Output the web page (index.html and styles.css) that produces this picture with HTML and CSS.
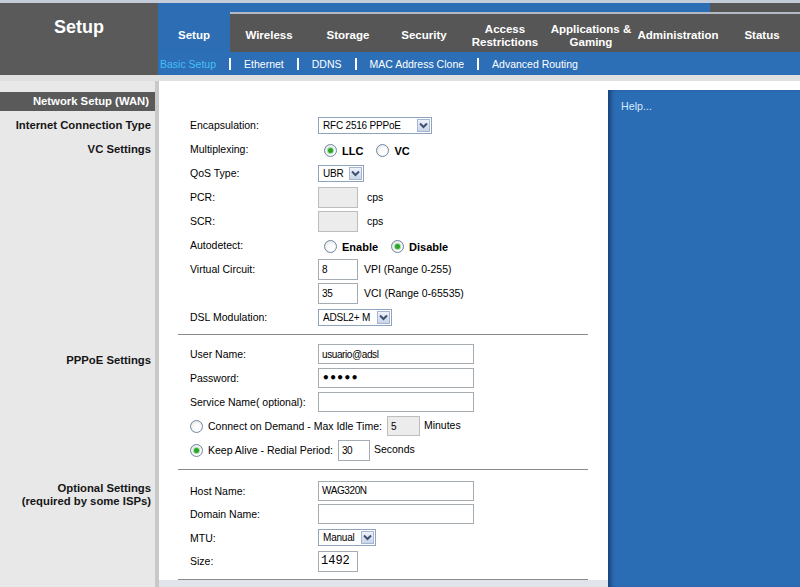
FILE: index.html
```html
<!DOCTYPE html>
<html lang="es">
<head>
<meta charset="utf-8">
<title>Setup</title>
<link rel="stylesheet" href="styles.css">
</head>
<body>
<div class="topline"></div>
<header class="header">
  <div class="brand">Setup</div>
  <nav class="nav">
    <div class="strip"><span class="strip-blue"></span><span class="strip-grey"></span></div>
    <ul class="tabs">
      <li class="tab active">Setup</li>
      <li class="tab">Wireless</li>
      <li class="tab">Storage</li>
      <li class="tab">Security</li>
      <li class="tab">Access<br>Restrictions</li>
      <li class="tab">Applications &amp;<br>Gaming</li>
      <li class="tab">Administration</li>
      <li class="tab">Status</li>
    </ul>
    <div class="subnav">
      <a class="sub current">Basic Setup</a><span class="sep"></span>
      <a class="sub">Ethernet</a><span class="sep"></span>
      <a class="sub">DDNS</a><span class="sep"></span>
      <a class="sub">MAC Address Clone</a><span class="sep"></span>
      <a class="sub">Advanced Routing</a>
    </div>
  </nav>
</header>
<div class="band"></div>
<main class="layout">
  <div class="side side-head"><div class="headbar">Network Setup (WAN)</div></div>
  <div class="content"></div>
  <aside class="help-col"><div class="help">Help...</div></aside>

  <div class="side s1">
    <div class="slabel">Internet Connection Type</div>
    <div class="slabel">VC Settings</div>
  </div>
  <div class="content">
    <div class="sec sec1">
      <div class="row"><span class="lbl">Encapsulation:</span>
        <span class="sel w114"><span class="val">RFC 2516 PPPoE</span><span class="arrow"><svg width="9" height="7" viewBox="0 0 9 7"><path d="M1 1.5 L4.5 5 L8 1.5" fill="none" stroke="#3f4f70" stroke-width="2"/></svg></span></span>
      </div>
      <div class="row"><span class="lbl">Multiplexing:</span>
        <span class="ctl opts"><span class="opt"><span class="radio on"></span>LLC</span><span class="opt"><span class="radio"></span>VC</span></span>
      </div>
      <div class="row"><span class="lbl">QoS Type:</span>
        <span class="sel w46"><span class="val">UBR</span><span class="arrow"><svg width="9" height="7" viewBox="0 0 9 7"><path d="M1 1.5 L4.5 5 L8 1.5" fill="none" stroke="#3f4f70" stroke-width="2"/></svg></span></span>
      </div>
      <div class="row"><span class="lbl">PCR:</span>
        <input class="txt w40 off" value=""><span class="unit">cps</span>
      </div>
      <div class="row"><span class="lbl">SCR:</span>
        <input class="txt w40 off" value=""><span class="unit">cps</span>
      </div>
      <div class="row"><span class="lbl">Autodetect:</span>
        <span class="ctl opts"><span class="opt"><span class="radio"></span>Enable</span><span class="opt"><span class="radio on"></span>Disable</span></span>
      </div>
      <div class="row"><span class="lbl">Virtual Circuit:</span>
        <input class="txt w40" value="8"><span class="note">VPI (Range 0-255)</span>
      </div>
      <div class="row"><span class="lbl"></span>
        <input class="txt w40" value="35"><span class="note">VCI (Range 0-65535)</span>
      </div>
      <div class="row"><span class="lbl">DSL Modulation:</span>
        <span class="sel w74"><span class="val">ADSL2+ M</span><span class="arrow"><svg width="9" height="7" viewBox="0 0 9 7"><path d="M1 1.5 L4.5 5 L8 1.5" fill="none" stroke="#3f4f70" stroke-width="2"/></svg></span></span>
      </div>
    </div>
    <div class="rule r1"></div>
  </div>

  <div class="side s2"><div class="slabel2">PPPoE Settings</div></div>
  <div class="content">
    <div class="sec sec2">
      <div class="row"><span class="lbl">User Name:</span><input class="txt w156" value="usuario@adsl"></div>
      <div class="row"><span class="lbl">Password:</span><input class="txt w156 pw" value="•••••"></div>
      <div class="row"><span class="lbl">Service Name( optional):</span><input class="txt w156" value=""></div>
      <div class="row"><span class="radio"></span><span class="rtext">Connect on Demand - Max Idle Time:</span><input class="txt w33 off h20" value="5"><span class="unit2 up">Minutes</span></div>
      <div class="row"><span class="radio on"></span><span class="rtext">Keep Alive - Redial Period:</span><input class="txt w32" value="30"><span class="unit2 up">Seconds</span></div>
    </div>
    <div class="rule r2"></div>
  </div>

  <div class="side s3"><div class="slabel2">Optional Settings<br>(required by some ISPs)</div></div>
  <div class="content">
    <div class="sec sec3">
      <div class="row"><span class="lbl">Host Name:</span><input class="txt w156" value="WAG320N"></div>
      <div class="row"><span class="lbl">Domain Name:</span><input class="txt w156" value=""></div>
      <div class="row"><span class="lbl">MTU:</span>
        <span class="sel w58"><span class="val">Manual</span><span class="arrow"><svg width="9" height="7" viewBox="0 0 9 7"><path d="M1 1.5 L4.5 5 L8 1.5" fill="none" stroke="#3f4f70" stroke-width="2"/></svg></span></span>
      </div>
      <div class="row"><span class="lbl">Size:</span><input class="txt w40 mono" value="1492"></div>
    </div>
    <div class="rule r3"></div>
  </div>

  <div class="side foot"></div>
  <div class="content foot2"></div>
</main>
</body>
</html>
```

FILE: styles.css
```css
html, body {
  margin: 0;
  padding: 0;
  height: 587px;
  overflow: hidden;
}
body {
  font-family: "Liberation Sans", Arial, sans-serif;
  background: #e8e8e8;
  color: #000;
}

.topline {
  height: 3px;
  background: #c3ccd8;
}

.header {
  display: grid;
  grid-template-columns: 158px 1fr;
  height: 72px;
}
.brand {
  background: #5a5a5a;
  color: #fff;
  font-weight: bold;
  font-size: 18px;
  line-height: 22px;
  text-align: center;
  padding-top: 13px;
  box-sizing: border-box;
}
.nav {
  background: #2c6db4;
  display: flex;
  flex-direction: column;
}
.strip {
  display: flex;
  height: 9px;
}
.strip-blue { flex: 1; background: #2c6db4; }
.strip-grey { width: 90px; background: #565656; }

.tabs {
  list-style: none;
  margin: 0;
  padding: 0;
  height: 40px;
  display: grid;
  grid-template-columns: 72px 78px 80px 72px 90px 82px 92px 1fr;
}
.tab {
  box-sizing: border-box;
  border-top: 2px solid #b4bac3;
  background: #565656;
  color: #fff;
  font-weight: bold;
  font-size: 11.5px;
  line-height: 13px;
  text-align: center;
  display: flex;
  align-items: center;
  justify-content: center;
  padding-top: 5px;
}
.tab.active {
  background: #2c6db4;
  border-top-color: #2c6db4;
}

.subnav {
  height: 23px;
  display: flex;
  align-items: center;
  padding-left: 2px;
  font-size: 10.5px;
  background: #2d6fb7;
}
.sub { color: #fff; }
.sub.current { color: #45bff7; }
.sep {
  width: 2px;
  height: 12px;
  background: #fff;
  margin: 0 13px;
}

.band {
  height: 6px;
  background: #e0e0e0;
}

.layout {
  display: grid;
  grid-template-columns: 159px 449px 1fr;
  grid-template-rows: auto auto auto auto 1fr;
  height: 506px;
}
.side {
  grid-column: 1;
  background: #e8e8e8;
  border-right: 4px solid #c9c9c9;
  box-sizing: border-box;
  text-align: right;
  padding-right: 4px;
  font-weight: bold;
  font-size: 11.3px;
  color: #161616;
}
.side-head { padding-top: 11px; padding-right: 0; }
.headbar {
  height: 19px;
  line-height: 19px;
  background: #5a5a5a;
  color: #fff;
  padding-right: 6px;
}
.s1 { padding-top: 2px; }
.slabel { height: 24px; line-height: 24px; }
.s2 { padding-top: 19px; }
.s3 { padding-top: 12px; }
.slabel2 { line-height: 13px; }

.content {
  grid-column: 2;
  background: #fff;
  padding: 0 20px 0 19px;
}
.help-col {
  grid-column: 3;
  grid-row: 1 / span 5;
  background: #fff;
  padding-top: 9px;
  display: flex;
}
.help {
  flex: 1;
  background: #2b6db5;
  box-shadow: inset 5px 0 4px -2px rgba(10, 30, 70, 0.55);
  color: #d4eaff;
  font-size: 10.7px;
  line-height: 12px;
  padding: 10px 13px;
}

.sec1 { padding-top: 2px; }
.sec2 { padding-top: 7px; }
.sec3 { padding-top: 9px; }
.rule { border-top: 1px solid #8a8a8a; }
.r1 { margin-top: 5px; }
.r2 { margin-top: 7px; }
.r3 { margin-top: 6px; }

.row {
  display: flex;
  align-items: center;
  height: 24px;
  padding-left: 12px;
  font-size: 10.5px;
}
.sec3 .row { height: 23.5px; }
.lbl { width: 128px; flex: none; }

.sel {
  display: inline-flex;
  align-items: center;
  box-sizing: border-box;
  height: 17px;
  border: 1px solid #8fa3bd;
  background: #fff;
  font-size: 10px;
  letter-spacing: -0.2px;
  padding-left: 4px;
}
.sel .val { flex: 1; white-space: nowrap; }
.arrow {
  width: 13px;
  height: 13px;
  box-sizing: border-box;
  margin-right: 1px;
  border: 1px solid #a7b6d0;
  background: linear-gradient(#eef2f9, #c9d5e8);
  display: flex;
  align-items: center;
  justify-content: center;
}
.w114 { width: 114px; }
.w46 { width: 46px; }
.w74 { width: 74px; }
.w58 { width: 58px; }

.txt {
  box-sizing: border-box;
  height: 21px;
  border: 1px solid #a5acb2;
  background: #fff;
  font-family: "Liberation Sans", Arial, sans-serif;
  font-size: 10px;
  letter-spacing: -0.4px;
  color: #000;
  padding: 0 2px 0 3px;
  margin: 0;
  outline: none;
}
.w40 { width: 40px; }
.w156 { width: 156px; height: 20px; }
.w33 { width: 33px; margin-left: 5px; }
.w32 { width: 32px; margin-left: 5px; }
.h20 { height: 20px; }
.off { background: #ececec; border-color: #bdbdbd; }
.pw { font-family: "DejaVu Sans", sans-serif; font-size: 12px; font-weight: bold; letter-spacing: -0.5px; }
.mono { font-family: "Liberation Mono", "Courier New", monospace; font-size: 12px; letter-spacing: 0; padding-left: 2px; }

.unit { margin-left: 9px; }
.note { margin-left: 6px; }
.unit2 { margin-left: 4px; }
.up { position: relative; top: -1px; }

.opts { display: flex; align-items: center; padding-left: 6px; padding-top: 3px; }
.opt {
  display: inline-flex;
  align-items: center;
  font-weight: bold;
  font-size: 11px;
}
.opt + .opt { margin-left: 13px; }
.opt .radio { margin-right: 5px; }

.radio {
  width: 13px;
  height: 13px;
  box-sizing: border-box;
  border-radius: 50%;
  border: 1px solid #6d86a3;
  background: radial-gradient(circle at 60% 60%, #ffffff 30%, #dcdcdc 100%);
  display: inline-flex;
  align-items: center;
  justify-content: center;
  flex: none;
}
.radio.on::after {
  content: "";
  width: 5px;
  height: 5px;
  border-radius: 50%;
  background: #2aa52a;
  box-shadow: 0 0 0 1px #a9dca9;
}
.rtext { margin-left: 5px; }

.foot2 { background: #e1e5eb; }
```
